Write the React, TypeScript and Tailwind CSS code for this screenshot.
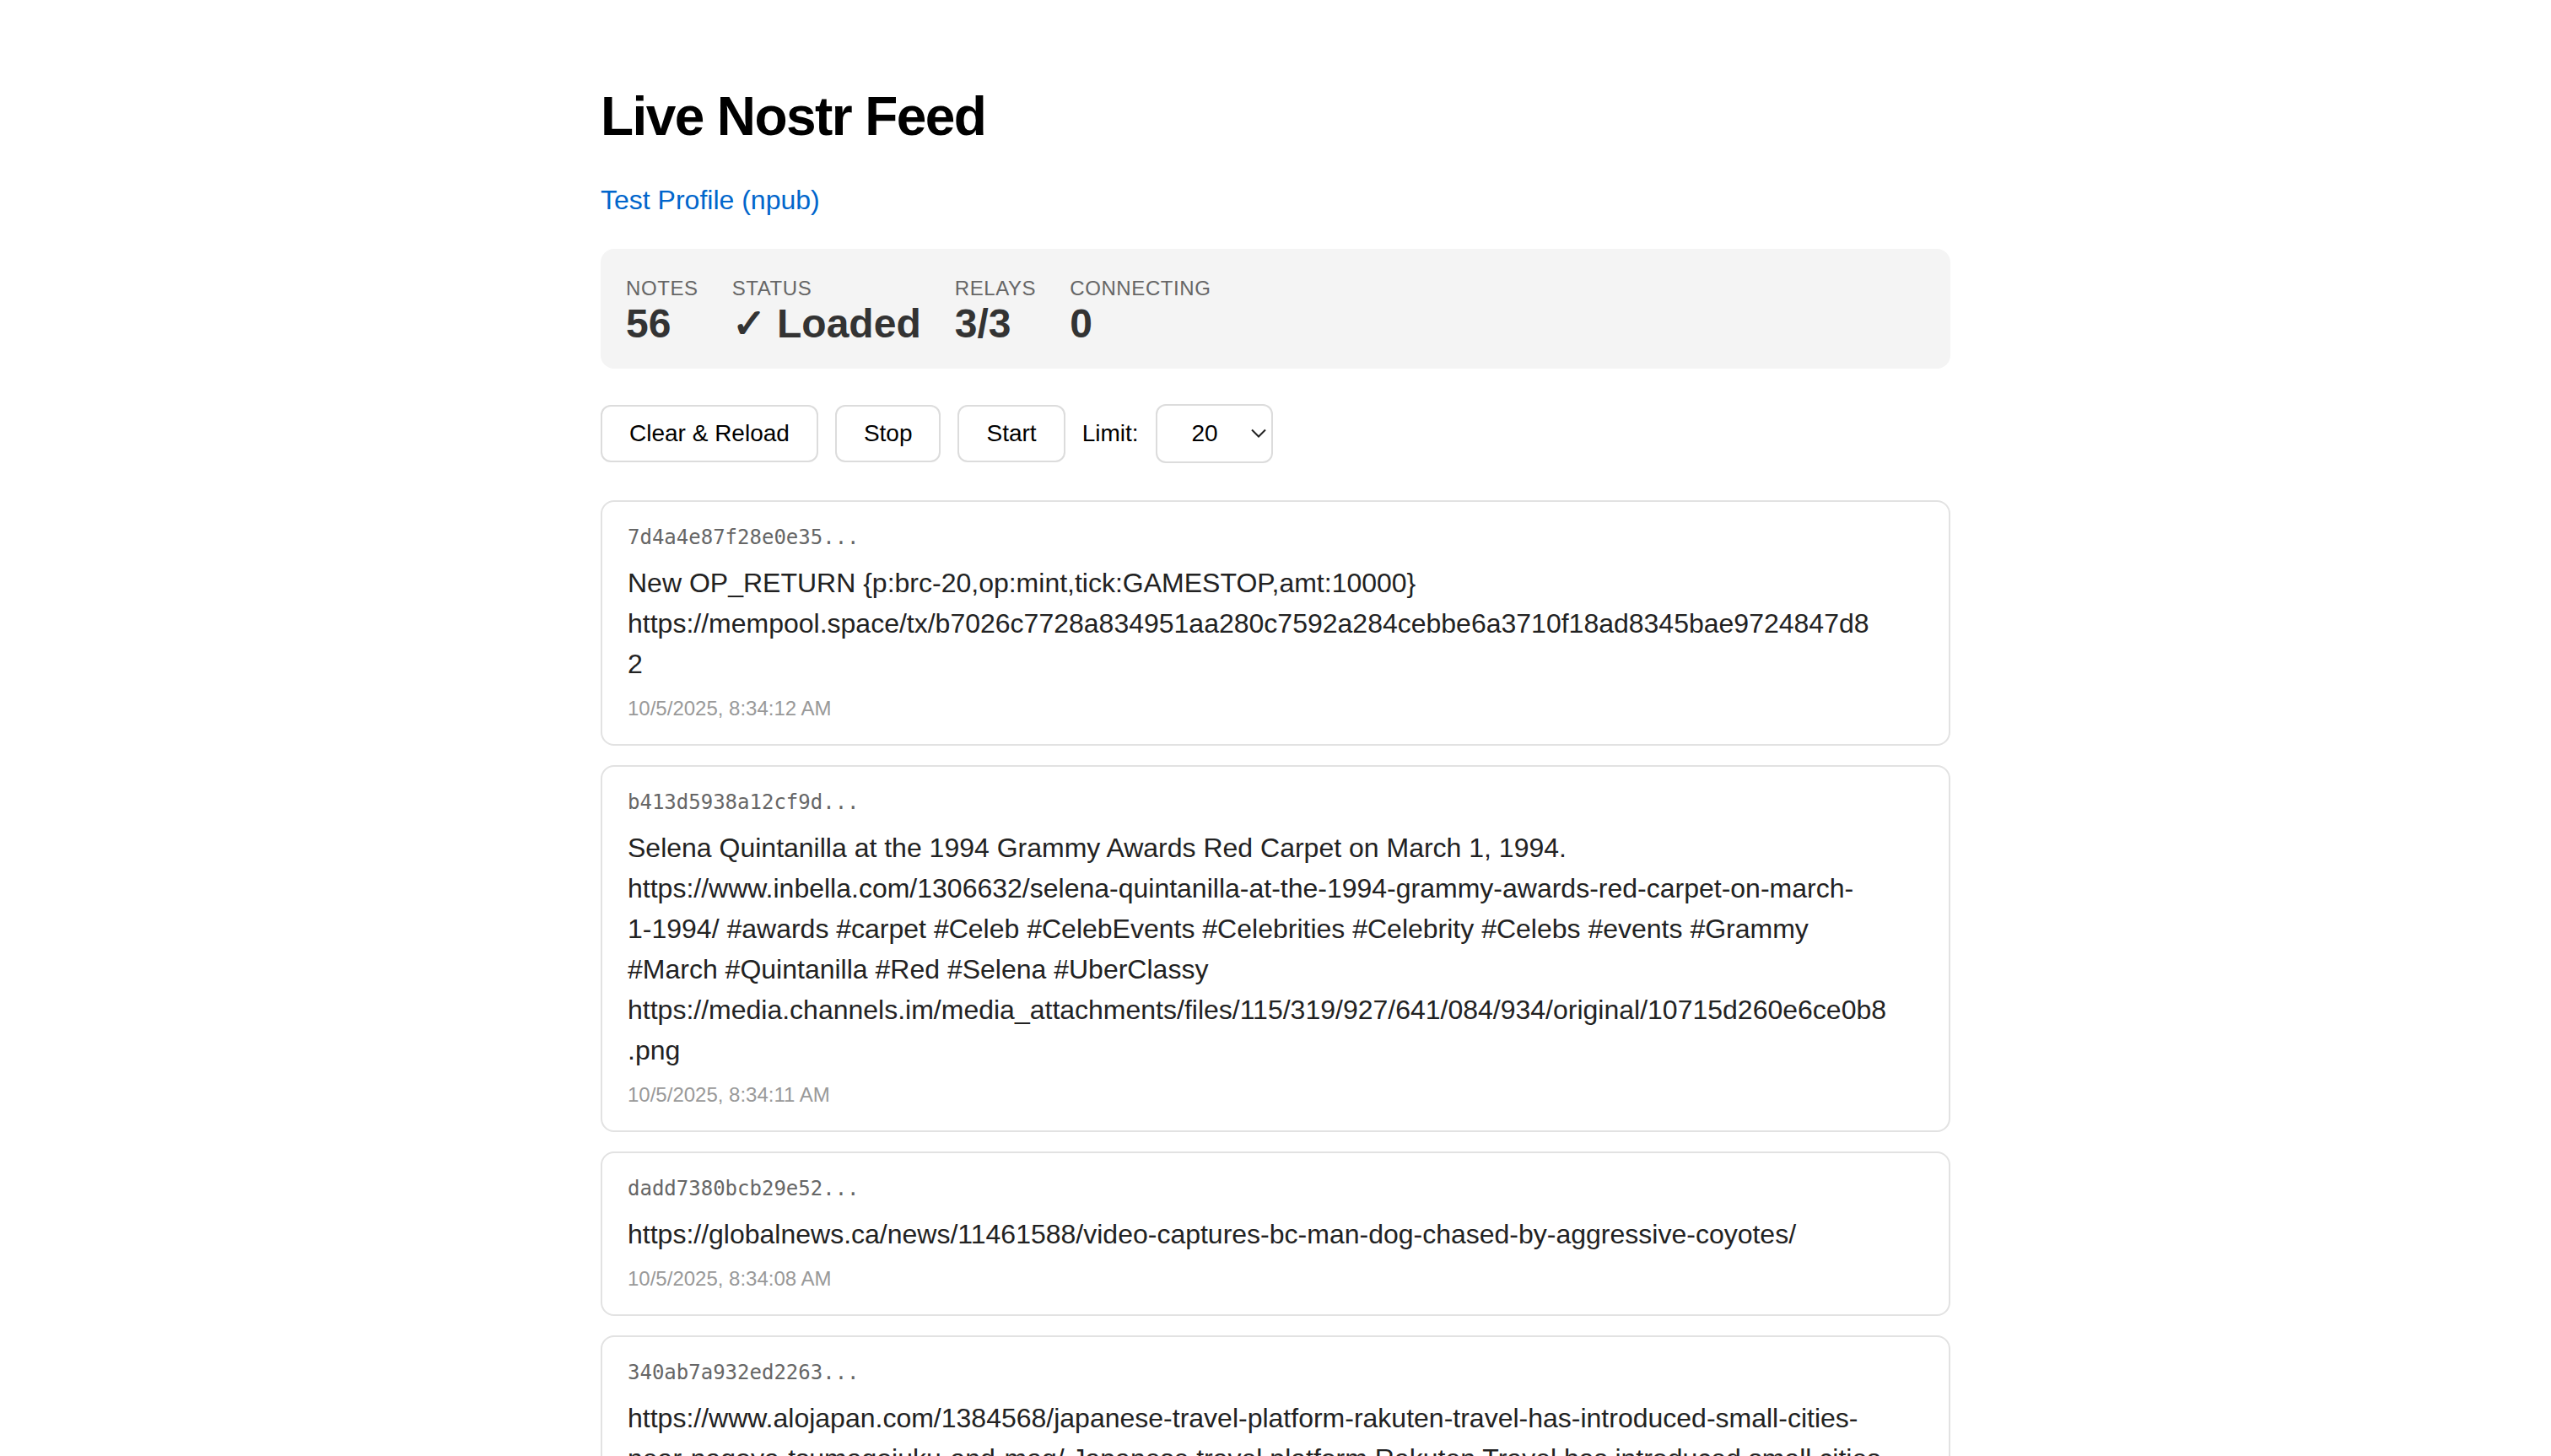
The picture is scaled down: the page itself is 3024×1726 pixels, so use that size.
import React, { useState } from "react";

type Note = {
  id: string;
  lines: string[];
  time: string;
};

// lines are kept as they wrap in the feed
const notes: Note[] = [
  {
    id: "7d4a4e87f28e0e35",
    lines: [
      "New OP_RETURN {p:brc-20,op:mint,tick:GAMESTOP,amt:10000}",
      "https://mempool.space/tx/b7026c7728a834951aa280c7592a284cebbe6a3710f18ad8345bae9724847d8",
      "2",
    ],
    time: "10/5/2025, 8:34:12 AM",
  },
  {
    id: "b413d5938a12cf9d",
    lines: [
      "Selena Quintanilla at the 1994 Grammy Awards Red Carpet on March 1, 1994.",
      "https://www.inbella.com/1306632/selena-quintanilla-at-the-1994-grammy-awards-red-carpet-on-march-",
      "1-1994/ #awards #carpet #Celeb #CelebEvents #Celebrities #Celebrity #Celebs #events #Grammy",
      "#March #Quintanilla #Red #Selena #UberClassy",
      "https://media.channels.im/media_attachments/files/115/319/927/641/084/934/original/10715d260e6ce0b8",
      ".png",
    ],
    time: "10/5/2025, 8:34:11 AM",
  },
  {
    id: "dadd7380bcb29e52",
    lines: ["https://globalnews.ca/news/11461588/video-captures-bc-man-dog-chased-by-aggressive-coyotes/"],
    time: "10/5/2025, 8:34:08 AM",
  },
  {
    id: "340ab7a932ed2263",
    lines: [
      "https://www.alojapan.com/1384568/japanese-travel-platform-rakuten-travel-has-introduced-small-cities-",
      "near-nagoya-tsumagojuku-and-mag/ Japanese travel platform Rakuten Travel has introduced small cities",
      "near Nagoya, Tsumagojuku and Magome, to its list of recommended destinations.",
    ],
    time: "10/5/2025, 8:34:05 AM",
  },
];

const Stat: React.FC<{ label: string; value: string }> = ({ label, value }) => (
  <div className="flex flex-col">
    <span className="text-[24px] leading-[28px] tracking-[0.6px] uppercase text-[#666]">{label}</span>
    <span className="mt-[3px] text-[48px] leading-[50px] font-bold text-[#333]">{value}</span>
  </div>
);

const App: React.FC = () => {
  const [limit, setLimit] = useState("20");

  return (
    <div className="min-h-screen bg-white font-['Liberation_Sans',Arial,sans-serif] text-[#333]">
      <div className="mx-auto w-[1600px] pt-[100px] pb-[40px]">
        <h1 className="text-[64px] leading-[77px] font-bold tracking-tight text-black">Live Nostr Feed</h1>

        <a href="#" className="mt-[36px] block w-fit text-[32px] leading-[48px] text-[#0066cc]">
          Test Profile (npub)
        </a>

        <div className="mt-[34px] flex gap-[40px] rounded-[16px] bg-[#f4f4f4] px-[30px] pt-[33px] pb-[28px]">
          <Stat label="Notes" value="56" />
          <Stat label="Status" value="✓ Loaded" />
          <Stat label="Relays" value="3/3" />
          <Stat label="Connecting" value="0" />
        </div>

        <div className="mt-[42px] flex items-center gap-[20px] text-[28px] text-black">
          <button className="rounded-[12px] border-2 border-[#dcdcdc] bg-white px-[32px] py-[16px] leading-[32px]">
            Clear &amp; Reload
          </button>
          <button className="rounded-[12px] border-2 border-[#dcdcdc] bg-white px-[32px] py-[16px] leading-[32px]">
            Stop
          </button>
          <button className="rounded-[12px] border-2 border-[#dcdcdc] bg-white px-[32px] py-[16px] leading-[32px]">
            Start
          </button>
          <span className="leading-[32px]">Limit:</span>
          <div className="relative">
            <select
              value={limit}
              onChange={(e) => setLimit(e.target.value)}
              className="h-[70px] w-[139px] appearance-none rounded-[12px] border-2 border-[#dcdcdc] bg-white pl-[41px] text-[28px] text-black outline-none"
            >
              <option value="10">10</option>
              <option value="20">20</option>
              <option value="50">50</option>
            </select>
            <svg
              className="pointer-events-none absolute right-[8px] top-[29px]"
              width="18"
              height="11"
              viewBox="0 0 18 11"
              fill="none"
              stroke="#222"
              strokeWidth="2"
            >
              <path d="M1 1.5l8 8 8-8" />
            </svg>
          </div>
        </div>

        <div className="mt-[44px] flex flex-col gap-[23px]">
          {notes.map((note) => (
            <div key={note.id} className="rounded-[16px] border-2 border-[#e2e2e2] bg-white px-[30px] py-[28px]">
              <div className="font-['DejaVu_Sans_Mono','Liberation_Mono',monospace] text-[24px] leading-[29px] text-[#666]">
                {note.id}...
              </div>
              <div className="mt-[15px] whitespace-pre-wrap break-words text-[32px] leading-[48px] text-[#222]">
                {note.lines.join("\n")}
              </div>
              <div className="mt-[14px] text-[24px] leading-[29px] text-[#999]">{note.time}</div>
            </div>
          ))}
        </div>
      </div>
    </div>
  );
};

export default App;
